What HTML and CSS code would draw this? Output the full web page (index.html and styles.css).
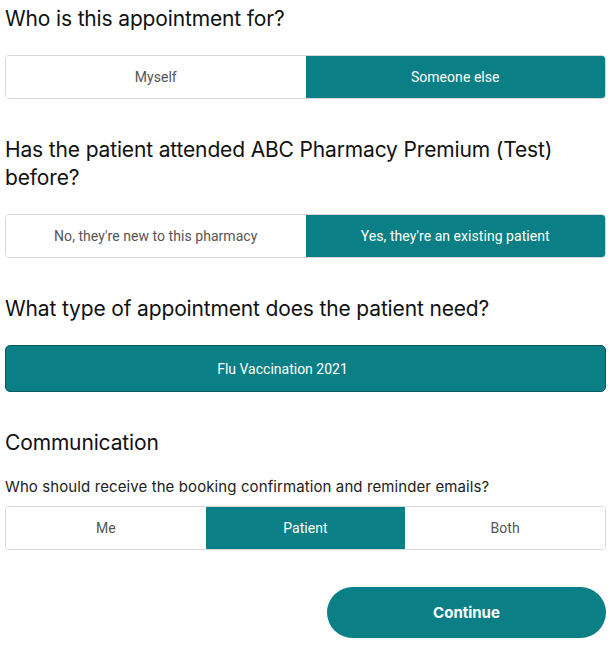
FILE: index.html
```html
<!DOCTYPE html>
<html lang="en">
<head>
<meta charset="utf-8">
<title>Booking</title>
<link rel="stylesheet" href="styles.css">
</head>
<body>
<main class="form">
  <section class="block block-first">
    <h2 class="q">Who is this appointment for?</h2>
    <div class="seg seg-2">
      <button class="opt">Myself</button>
      <button class="opt is-on">Someone else</button>
    </div>
  </section>

  <section class="block">
    <h2 class="q">Has the patient attended ABC Pharmacy Premium (Test) before?</h2>
    <div class="seg seg-2">
      <button class="opt">No, they're new to this pharmacy</button>
      <button class="opt is-on">Yes, they're an existing patient</button>
    </div>
  </section>

  <section class="block">
    <h2 class="q">What type of appointment does the patient need?</h2>
    <button class="type-btn">Flu Vaccination 2021</button>
  </section>

  <section class="block">
    <h2 class="q">Communication</h2>
    <p class="sub">Who should receive the booking confirmation and reminder emails?</p>
    <div class="seg seg-3">
      <button class="opt">Me</button>
      <button class="opt is-on">Patient</button>
      <button class="opt">Both</button>
    </div>
  </section>

  <div class="actions">
    <button class="continue">Continue</button>
  </div>
</main>
</body>
</html>
```

FILE: styles.css
```css
* { box-sizing: border-box; }

html, body {
  margin: 0;
  padding: 0;
  background: #ffffff;
}

body {
  font-family: Inter, "Liberation Sans", Arial, sans-serif;
  color: #111111;
}

.form {
  margin: 0 8px 0 5px;
  display: flex;
  flex-direction: column;
}

.block {
  display: flex;
  flex-direction: column;
}

.q {
  margin: 0;
  font-size: 21px;
  font-weight: 400;
  line-height: 28px;
  letter-spacing: -0.15px;
  color: #111;
}

.block-first .q { margin-top: 5px; }

.block + .block { margin-top: 37px; }

.block .q + .seg,
.block .q + .type-btn { margin-top: 22px; }

.seg {
  display: grid;
  border: 1px solid #d8d8d8;
  border-radius: 4px;
  overflow: hidden;
  height: 44px;
}

.seg-2 { grid-template-columns: 1fr 1fr; }
.seg-3 { grid-template-columns: 1fr 1fr 1fr; }

.opt {
  border: 0;
  background: #ffffff;
  font-family: Roboto, "Liberation Sans", Arial, sans-serif;
  font-size: 14px;
  letter-spacing: 0.05px;
  color: #555555;
  padding: 0;
  margin: 0;
  cursor: pointer;
}

.opt.is-on {
  background: #0b7f86;
  color: #ffffff;
}

.type-btn {
  height: 47px;
  border: 1.5px solid #0b5a5e;
  border-radius: 5px;
  background: #0b7f86;
  color: #ffffff;
  font-family: Roboto, "Liberation Sans", Arial, sans-serif;
  font-size: 14px;
  padding: 0 46px 0 0;
  cursor: pointer;
}

.sub {
  margin: 20px 0 9px;
  font-size: 15px;
  line-height: 20px;
  letter-spacing: 0.1px;
  color: #222;
}

.actions {
  display: flex;
  justify-content: flex-end;
  margin-top: 37px;
}

.continue {
  width: 279px;
  height: 51px;
  border: 0;
  border-radius: 26px;
  background: #0b7f86;
  color: #ffffff;
  font-family: Inter, "Liberation Sans", Arial, sans-serif;
  font-weight: 700;
  font-size: 15px;
  cursor: pointer;
}
```
